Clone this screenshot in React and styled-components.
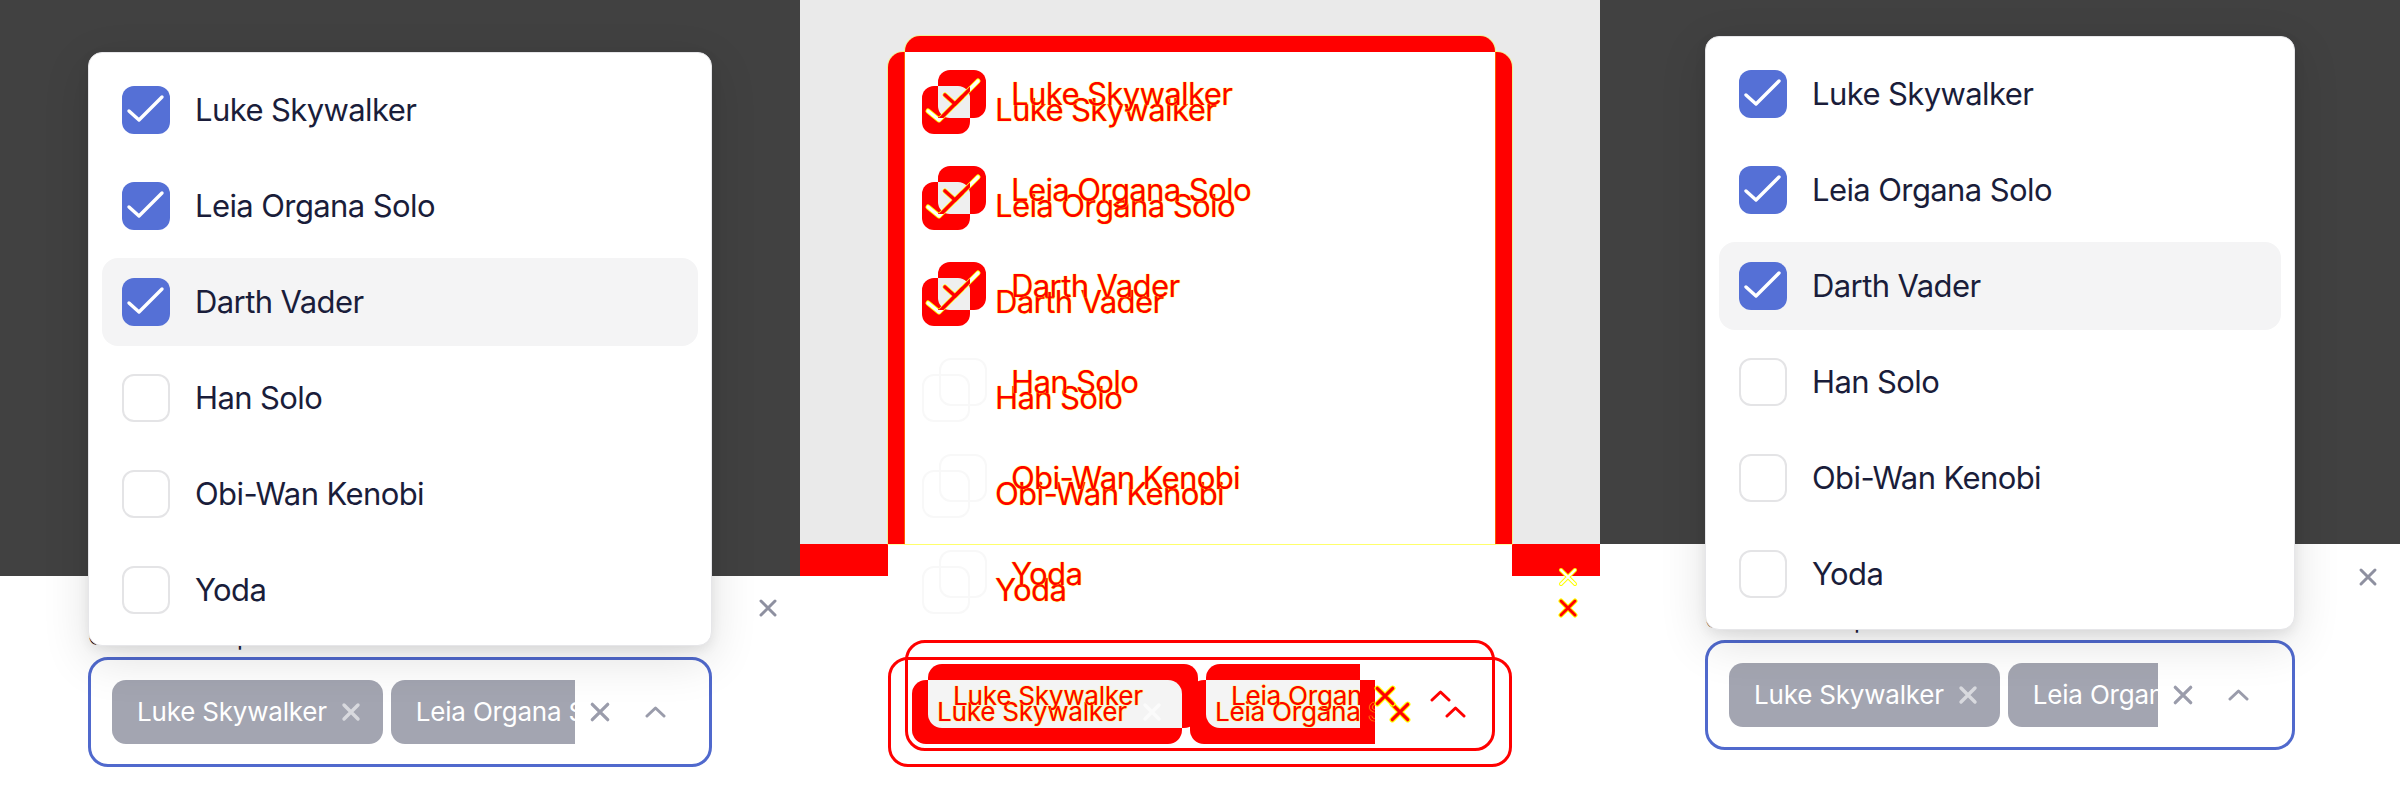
import React, { useId } from 'react';
import styled, { createGlobalStyle, css } from 'styled-components';

const FONT = `Inter, "Noto Sans", "Liberation Sans", sans-serif`;

const GlobalStyle = createGlobalStyle`
  html, body { margin: 0; padding: 0; background: #ffffff; }
  body { font-family: ${FONT}; -webkit-font-smoothing: antialiased; }
`;

const NAMES = ['Luke Skywalker', 'Leia Organa Solo', 'Darth Vader', 'Han Solo', 'Obi-Wan Kenobi', 'Yoda'];
const CHECKED = [true, true, true, false, false, false];

const Strip = styled.div`
  display: flex;
  width: 2400px;
  height: 800px;
  overflow: hidden;
`;

/* ---------- real panels ---------- */
const Panel = styled.section`
  position: relative;
  flex: 0 0 800px;
  width: 800px;
  height: 800px;
  display: flex;
  flex-direction: column;
  overflow: hidden;
  background: #fff;
`;
const Backdrop = styled.div`
  flex: 0 0 ${p => p.$h}px;
  background: #414141;
`;
const Sheet = styled.div`
  flex: 1;
  display: flex;
  flex-direction: column;
  padding-top: ${p => p.$pt}px;
`;
const SheetHeader = styled.div`
  display: flex;
  justify-content: flex-end;
  padding-right: 22px;
  height: 20px;
`;
const Field = styled.div`
  margin: ${p => p.$mt}px ${p => p.$mx}px 0;
`;
const FieldLabel = styled.div`
  font-size: 24px;
  line-height: 29px;
  color: #1b1f3b;
  white-space: nowrap;
  margin-bottom: 6px;
`;
const Control = styled.div`
  position: relative;
`;
const InputBox = styled.div`
  box-sizing: border-box;
  height: 110px;
  border: 3px solid #5069cd;
  border-radius: 20px;
  background: #fff;
  display: flex;
  align-items: center;
  padding: 0 43px 0 21px;
`;
const Menu = styled.div`
  position: absolute;
  left: 0;
  right: 0;
  bottom: calc(100% + ${p => p.$gap}px);
  z-index: 2;
  box-sizing: border-box;
  background: #fff;
  border: 1px solid #e6e6e9;
  border-radius: 14px;
  padding: 13px 13px 11px;
  display: flex;
  flex-direction: column;
  gap: 8px;
  box-shadow: 0 4px 12px rgba(0, 0, 0, 0.07), 0 14px 48px rgba(0, 0, 0, 0.12);
`;
const Option = styled.div`
  flex: 0 0 88px;
  border-radius: 16px;
  display: flex;
  align-items: center;
  gap: 25px;
  padding-left: 20px;
  background: ${p => (p.$active ? '#f4f4f5' : 'transparent')};
  font-size: 31px;
  line-height: 40px;
  color: #1a1d3a;
  white-space: nowrap;
  letter-spacing: -0.6px;
`;
const Box = styled.span`
  flex: 0 0 48px;
  height: 48px;
  box-sizing: border-box;
  border-radius: 12px;
  display: flex;
  align-items: center;
  justify-content: center;
  background: ${p => (p.$on ? '#5570d6' : '#fff')};
  border: ${p => (p.$on ? 'none' : '2px solid #e4e4e6')};
`;
const TagList = styled.div`
  flex: 1;
  min-width: 0;
  display: flex;
  align-items: center;
  gap: 8px;
  overflow: hidden;
`;
const Tag = styled.div`
  flex-shrink: 0;
  height: 64px;
  border-radius: 14px;
  background: #a3a5b1;
  color: #fff;
  display: flex;
  align-items: center;
  gap: 14px;
  padding: 0 22px 0 25px;
  font-size: 26px;
  line-height: 32px;
  white-space: nowrap;
  letter-spacing: -0.2px;
`;
const ClearBtn = styled.span`
  flex-shrink: 0;
  margin-left: 14px;
  display: flex;
`;
const ChevronBtn = styled.span`
  flex-shrink: 0;
  margin-left: 34px;
  display: flex;
`;
const IconSlot = styled.span`
  display: flex;
`;

const Cross = ({ size = 20, color, sw = 3, outline }) => (
  <svg width={size} height={size} viewBox="0 0 20 20" fill="none">
    {outline && <path d="M3 3L17 17M17 3L3 17" stroke={outline} strokeWidth={sw + 2} strokeLinecap="round" />}
    <path d="M3 3L17 17M17 3L3 17" stroke={color} strokeWidth={sw} strokeLinecap="round" />
  </svg>
);
const Chevron = ({ color }) => (
  <svg width="21" height="12" viewBox="0 0 21 12" fill="none">
    <polyline points="2,10 10.5,2 19,10" stroke={color} strokeWidth="3" strokeLinecap="round" strokeLinejoin="round" />
  </svg>
);
const Check = () => (
  <svg width="48" height="48" viewBox="0 0 48 48" fill="none">
    <polyline points="7,25 17,34 40,11" stroke="#fff" strokeWidth="3.4" strokeLinecap="round" strokeLinejoin="round" />
  </svg>
);

function Picker({ backdrop, pt, mt, mx, gap }) {
  return (
    <Panel>
      <Backdrop $h={backdrop} />
      <Sheet $pt={pt}>
        <SheetHeader>
          <IconSlot><Cross size={20} color="#8e90a0" sw={3} /></IconSlot>
        </SheetHeader>
        <Field $mt={mt} $mx={mx}>
          <FieldLabel>Choose multiple</FieldLabel>
          <Control>
            <Menu $gap={gap}>
              {NAMES.map((n, i) => (
                <Option key={n} $active={i === 2}>
                  <Box $on={CHECKED[i]}>{CHECKED[i] && <Check />}</Box>
                  {n}
                </Option>
              ))}
            </Menu>
            <InputBox>
              <TagList>
                <Tag>Luke Skywalker<Cross size={20} color="#d8d9de" sw={3.4} /></Tag>
                <Tag>Leia Organa Solo<Cross size={20} color="#d8d9de" sw={3.4} /></Tag>
              </TagList>
              <ClearBtn><Cross size={22} color="#9a9cab" sw={3} /></ClearBtn>
              <ChevronBtn><Chevron color="#9a9cab" /></ChevronBtn>
            </InputBox>
          </Control>
        </Field>
      </Sheet>
    </Panel>
  );
}

/* ---------- diff panel ---------- */
const DiffPanel = styled.section`
  position: relative;
  flex: 0 0 800px;
  width: 800px;
  height: 800px;
  overflow: hidden;
  background: #fff;
  display: flex;
  flex-direction: column;
`;
const DiffFaded = styled.div`
  flex: 0 0 544px;
  background: #eaeaea;
`;
const DiffBandRow = styled.div`
  flex: 0 0 32px;
  display: flex;
  justify-content: space-between;
`;
const DiffBandEdge = styled.div`
  width: 88px;
  background: #ff0000;
`;
const at = css`
  position: absolute;
  left: ${p => p.$x}px;
  top: ${p => p.$y}px;
`;
const DiffCardEdge = styled.div`
  ${at};
  width: ${p => p.$w}px;
  height: ${p => p.$h}px;
  background: #ff0000;
  border-radius: 15px 15px 0 0;
  box-shadow: 0 0 0 1px rgba(255, 255, 0, 0.35);
`;
const DiffCardInner = styled.div`
  ${at};
  width: ${p => p.$w}px;
  height: ${p => p.$h}px;
  background: #fff;
`;
const DiffText = styled.div`
  ${at};
  font-size: ${p => p.$fs}px;
  line-height: ${p => p.$lh}px;
  letter-spacing: ${p => (p.$fs > 30 ? -0.6 : -0.2)}px;
  color: #ff0000;
  white-space: nowrap;
  text-shadow: 0 0 1px #ffff00, 0 0 1px #ffff00;
  ${p => p.$clip && `width: ${p.$clip}px; overflow: hidden;`}
`;
const DiffOutline = styled.div`
  ${at};
  box-sizing: border-box;
  width: ${p => p.$w}px;
  height: ${p => p.$h}px;
  border: 3px solid #ff0000;
  border-radius: 20px;
`;
const DiffShape = styled.div`
  ${at};
  width: ${p => p.$w}px;
  height: ${p => p.$h}px;
  background: ${p => p.$bg || '#ff0000'};
  border-radius: ${p => p.$r};
`;
const DiffFaintBox = styled.div`
  ${at};
  box-sizing: border-box;
  width: 48px;
  height: 48px;
  border: 2px solid #f8f8f8;
  border-radius: 12px;
`;
const DiffIcon = styled.span`
  ${at};
  display: flex;
`;

function DiffCheck({ x, y }) {
  const id = useId().replace(/:/g, '');
  const left = '6,41 17,50 40,27';
  const right = '23,25 33,34 56,11';
  return (
    <DiffIcon $x={x} $y={y}>
      <svg width="64" height="64" viewBox="0 0 64 64" fill="none">
        <defs>
          <clipPath id={`L${id}`}><rect x="0" y="16" width="48" height="48" rx="12" /></clipPath>
          <clipPath id={`O${id}`}><rect x="16" y="16" width="32" height="32" /></clipPath>
        </defs>
        <rect x="0" y="16" width="48" height="48" rx="12" fill="#ff0000" />
        <rect x="16" y="0" width="48" height="48" rx="12" fill="#ff0000" />
        <rect x="16" y="0" width="48" height="48" rx="12" fill="#efefef" clipPath={`url(#L${id})`} />
        <g strokeLinecap="round" strokeLinejoin="round">
          <polyline points={left} stroke="#ffff00" strokeWidth="5" />
          <polyline points={right} stroke="#ffff00" strokeWidth="5" />
          <polyline points={left} stroke="#ffffff" strokeWidth="3.2" />
          <polyline points={right} stroke="#ffffff" strokeWidth="3.2" />
          <g clipPath={`url(#O${id})`}>
            <polyline points={left} stroke="#ff0000" strokeWidth="3.6" />
            <polyline points={right} stroke="#ff0000" strokeWidth="3.6" />
          </g>
        </g>
      </svg>
    </DiffIcon>
  );
}

function Diff() {
  return (
    <DiffPanel>
      <DiffFaded />
      <DiffBandRow>
        <DiffBandEdge />
        <DiffBandEdge />
      </DiffBandRow>

      <DiffCardEdge $x={88} $y={52} $w={624} $h={492} />
      <DiffCardEdge $x={105} $y={36} $w={590} $h={508} />
      <DiffCardInner $x={105} $y={52} $w={590} $h={492} />

      {NAMES.map((n, i) =>
        CHECKED[i] ? (
          <DiffCheck key={`c${i}`} x={122} y={70 + 96 * i} />
        ) : (
          <React.Fragment key={`c${i}`}>
            <DiffFaintBox $x={122} $y={86 + 96 * i} />
            <DiffFaintBox $x={139} $y={70 + 96 * i} />
          </React.Fragment>
        )
      )}
      {NAMES.map((n, i) => (
        <React.Fragment key={`t${i}`}>
          <DiffText $x={195} $y={90 + 96 * i} $fs={31} $lh={40}>{n}</DiffText>
          <DiffText $x={211} $y={74 + 96 * i} $fs={31} $lh={40}>{n}</DiffText>
        </React.Fragment>
      ))}

      <DiffOutline $x={88} $y={657} $w={624} $h={110} />
      <DiffOutline $x={105} $y={640} $w={590} $h={111} />

      <DiffShape $x={112} $y={680} $w={270} $h={64} $r="14px" />
      <DiffShape $x={128} $y={664} $w={270} $h={64} $r="14px" />
      <DiffShape $x={128} $y={680} $w={254} $h={48} $r="0 14px 0 14px" $bg="#f4f4f4" />
      <DiffShape $x={390} $y={680} $w={185} $h={64} $r="14px 0 0 14px" />
      <DiffShape $x={406} $y={664} $w={154} $h={64} $r="14px 0 0 14px" />
      <DiffShape $x={406} $y={680} $w={154} $h={48} $r="0 0 0 14px" $bg="#f4f4f4" />

      <DiffIcon $x={342} $y={702}><Cross size={20} color="#fbfbfb" sw={3.4} /></DiffIcon>
      <DiffText $x={137} $y={696} $fs={26} $lh={32}>Luke Skywalker</DiffText>
      <DiffText $x={153} $y={680} $fs={26} $lh={32}>Luke Skywalker</DiffText>
      <DiffText $x={415} $y={696} $fs={26} $lh={32} $clip={160}>Leia Organa Solo</DiffText>
      <DiffText $x={431} $y={680} $fs={26} $lh={32} $clip={129}>Leia Organa Solo</DiffText>

      <DiffIcon $x={589} $y={701}><Cross size={22} color="#ff0000" sw={3} outline="#ffff00" /></DiffIcon>
      <DiffIcon $x={574} $y={685}><Cross size={22} color="#ff0000" sw={3} outline="#ffff00" /></DiffIcon>
      <DiffIcon $x={645} $y={706}><Chevron color="#ff0000" /></DiffIcon>
      <DiffIcon $x={630} $y={690}><Chevron color="#ff0000" /></DiffIcon>

      <DiffIcon $x={758} $y={598}><Cross size={20} color="#ff0000" sw={3} outline="#ffff00" /></DiffIcon>
      <DiffIcon $x={758} $y={567}><Cross size={20} color="#ffffff" sw={2} outline="#ffff00" /></DiffIcon>
    </DiffPanel>
  );
}

export default function App() {
  return (
    <>
      <GlobalStyle />
      <Strip>
        <Picker backdrop={576} pt={22} mt={4} mx={88} gap={11} />
        <Diff />
        <Picker backdrop={544} pt={23} mt={18} mx={105} gap={10} />
      </Strip>
    </>
  );
}
